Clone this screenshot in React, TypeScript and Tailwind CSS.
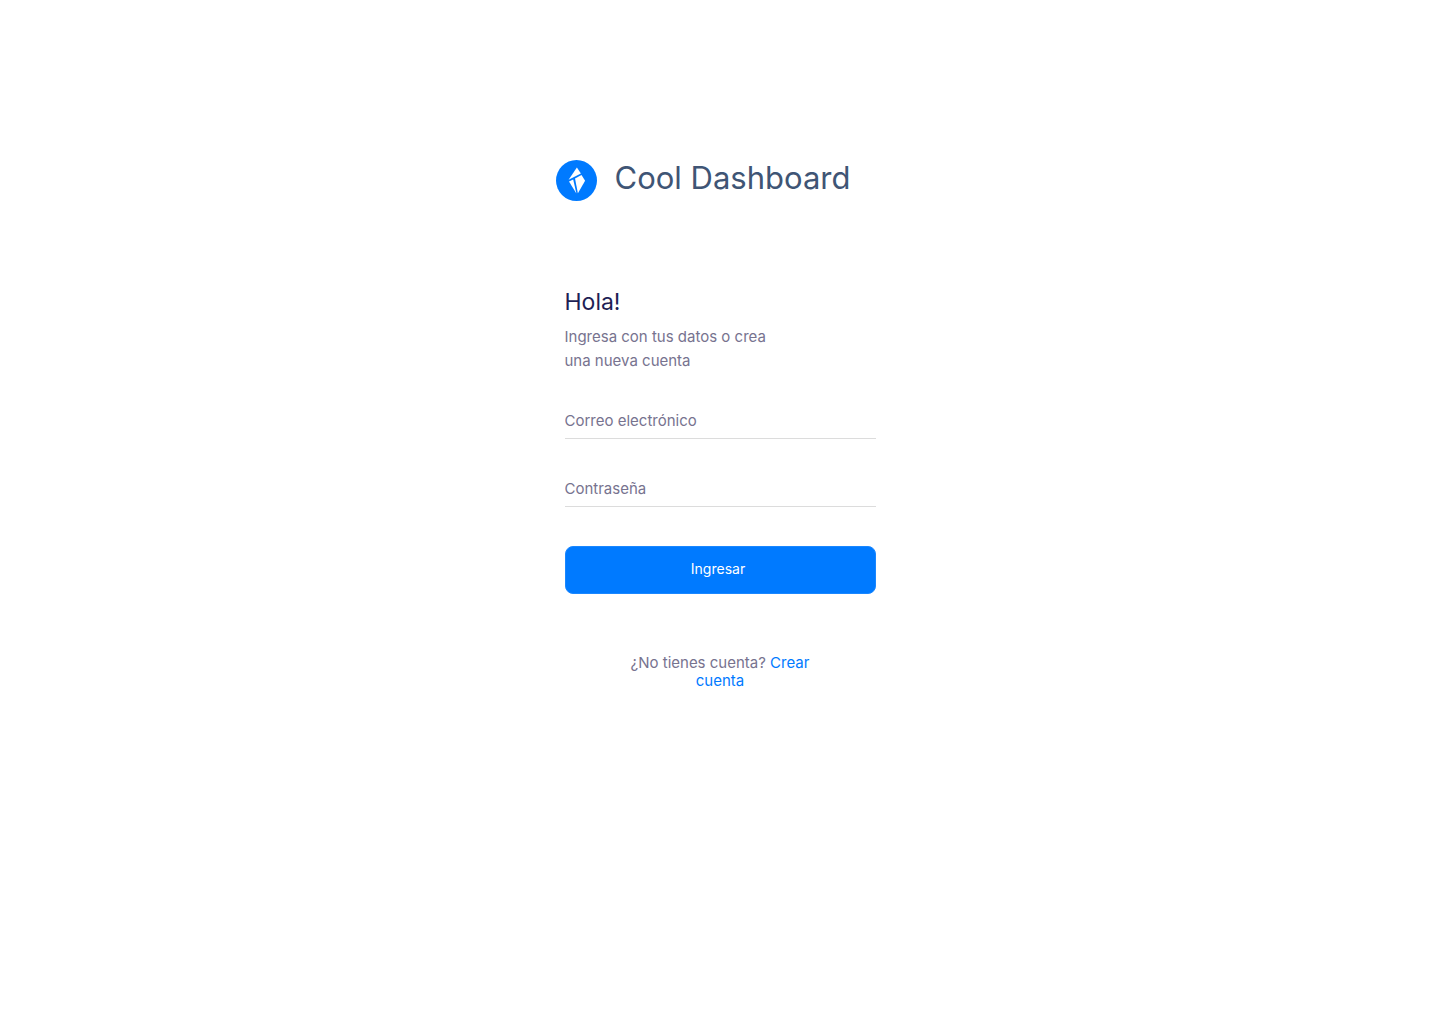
function Logo() {
  return (
    <svg className="size-[41px] shrink-0" viewBox="0 0 41 41" aria-hidden="true">
      <circle cx="20.5" cy="20.5" r="20.5" fill="#007AFF" />
      <g fill="#fff">
        <path d="M20.9 7.6 L12.6 19.8 L24.9 13.5 Z" />
        <path d="M25.5 15.1 L29.1 20.8 L21.9 33.2 L19 18.5 Z" />
        <path d="M13 21.4 L17.2 19.4 L20.4 33.4 Z" />
      </g>
    </svg>
  );
}

type FieldProps = { id: string; label: string; type: string };

function Field({ id, label, type }: FieldProps) {
  return (
    <div className="border-b border-[#dcdcdc]">
      <input
        id={id}
        type={type}
        aria-label={label}
        placeholder={label}
        className="block h-9 w-full bg-transparent text-[15px] text-[#77738f] outline-none placeholder:text-[#77738f] placeholder:opacity-100"
      />
    </div>
  );
}

export default function App() {
  return (
    <main className="flex min-h-screen flex-col items-center bg-white px-4 pt-[154px] pb-16 font-['Inter',sans-serif] text-[#77738f]">
      <header className="flex w-full max-w-[329px] items-center gap-[18px]">
        <div className="pt-1">
          <Logo />
        </div>
        <span className="text-[31px] leading-12 whitespace-nowrap text-[#3f5575]">Cool Dashboard</span>
      </header>

      <section className="mt-[84px] w-full max-w-[311px]">
        <h1 className="text-[23px] leading-8 text-[#1e1f55]">Hola!</h1>
        <p className="mt-[7px] max-w-[220px] text-[15px] leading-6">Ingresa con tus datos o crea una nueva cuenta</p>

        <form className="mt-[29px]" onSubmit={(e) => e.preventDefault()}>
          <div className="flex flex-col gap-[31px]">
            <Field id="email" label="Correo electrónico" type="email" />
            <Field id="password" label="Contraseña" type="password" />
          </div>
          <button
            type="submit"
            className="mt-[39px] block h-12 w-full rounded-lg border border-[#1a87ff] bg-[#007AFF] pr-1 pb-[3px] text-sm text-white"
          >
            Ingresar
          </button>
        </form>

        <p className="mx-auto mt-[60px] max-w-[200px] text-center text-[15px] leading-[18px]">
          ¿No tienes cuenta?{" "}
          <a href="#crear-cuenta" className="text-[#007AFF]">
            Crear cuenta
          </a>
        </p>
      </section>
    </main>
  );
}
